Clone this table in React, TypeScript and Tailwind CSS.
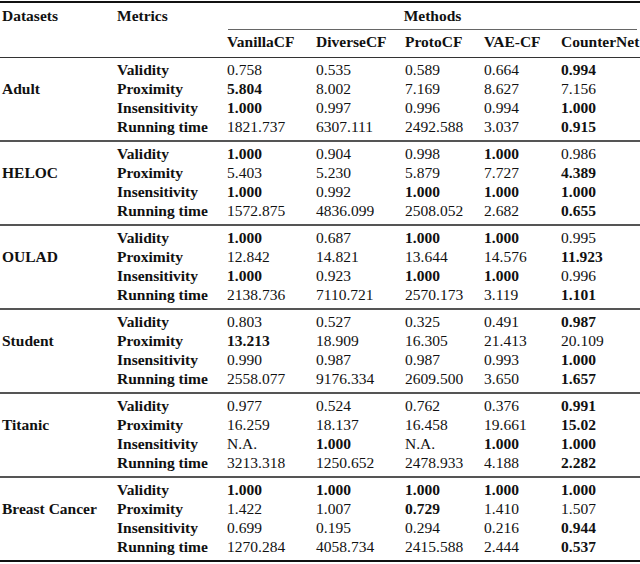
type Group = { name: string; rows: string[][] };

const metrics = ['Validity', 'Proximity', 'Insensitivity', 'Running time'];
const methods = ['VanillaCF', 'DiverseCF', 'ProtoCF', 'VAE-CF', 'CounterNet'];

// '*' marks a bold (best) value
const groups: Group[] = [
  {
    name: 'Adult',
    rows: [
      ['0.758', '0.535', '0.589', '0.664', '*0.994'],
      ['*5.804', '8.002', '7.169', '8.627', '7.156'],
      ['*1.000', '0.997', '0.996', '0.994', '*1.000'],
      ['1821.737', '6307.111', '2492.588', '3.037', '*0.915'],
    ],
  },
  {
    name: 'HELOC',
    rows: [
      ['*1.000', '0.904', '0.998', '*1.000', '0.986'],
      ['5.403', '5.230', '5.879', '7.727', '*4.389'],
      ['*1.000', '0.992', '*1.000', '*1.000', '*1.000'],
      ['1572.875', '4836.099', '2508.052', '2.682', '*0.655'],
    ],
  },
  {
    name: 'OULAD',
    rows: [
      ['*1.000', '0.687', '*1.000', '*1.000', '0.995'],
      ['12.842', '14.821', '13.644', '14.576', '*11.923'],
      ['*1.000', '0.923', '*1.000', '*1.000', '0.996'],
      ['2138.736', '7110.721', '2570.173', '3.119', '*1.101'],
    ],
  },
  {
    name: 'Student',
    rows: [
      ['0.803', '0.527', '0.325', '0.491', '*0.987'],
      ['*13.213', '18.909', '16.305', '21.413', '20.109'],
      ['0.990', '0.987', '0.987', '0.993', '*1.000'],
      ['2558.077', '9176.334', '2609.500', '3.650', '*1.657'],
    ],
  },
  {
    name: 'Titanic',
    rows: [
      ['0.977', '0.524', '0.762', '0.376', '*0.991'],
      ['16.259', '18.137', '16.458', '19.661', '*15.02'],
      ['N.A.', '*1.000', 'N.A.', '*1.000', '*1.000'],
      ['3213.318', '1250.652', '2478.933', '4.188', '*2.282'],
    ],
  },
  {
    name: 'Breast Cancer',
    rows: [
      ['*1.000', '*1.000', '*1.000', '*1.000', '*1.000'],
      ['1.422', '1.007', '*0.729', '1.410', '1.507'],
      ['0.699', '0.195', '0.294', '0.216', '*0.944'],
      ['1270.284', '4058.734', '2415.588', '2.444', '*0.537'],
    ],
  },
];

function cellPad(i: number, gi: number) {
  const top = i === 0 ? (gi === 0 ? 'pt-[2px]' : 'pt-[2px] border-t-2 border-[#555]') : '';
  const bottom = i === 3 ? 'pb-[4px]' : '';
  return `${top} ${bottom}`;
}

export default function App() {
  return (
    <div className="w-[640px] h-[564px] bg-white text-[#111] pt-[1px] font-['Liberation_Serif','Times_New_Roman',serif] text-[15.5px] leading-[19px]">
      <div className="border-t-2 border-b-2 border-[#111]">
        <table className="w-full table-fixed border-collapse">
          <colgroup>
            <col className="w-[115px]" />
            <col className="w-[110px]" />
            <col className="w-[89px]" />
            <col className="w-[89px]" />
            <col className="w-[79px]" />
            <col className="w-[77px]" />
            <col className="w-[81px]" />
          </colgroup>
          <thead>
            <tr>
              <th className="text-left align-top font-bold pl-[2px] pt-[3px]">Datasets</th>
              <th className="text-left align-top font-bold pl-[2px] pt-[3px]">Metrics</th>
              <th colSpan={5} className="font-bold pt-[3px] align-top">
                <div className="mx-[3px] pb-[4px] border-b border-[#666] text-center">Methods</div>
              </th>
            </tr>
            <tr>
              <th className="border-b border-[#333] pt-[2px] pb-[6px]"></th>
              <th className="border-b border-[#333] pt-[2px] pb-[6px]"></th>
              {methods.map(m => (
                <th key={m} className="text-left font-bold pl-[2px] pt-[2px] pb-[6px] border-b border-[#333] whitespace-nowrap">
                  {m}
                </th>
              ))}
            </tr>
          </thead>
          <tbody>
            {groups.map((g, gi) =>
              g.rows.map((row, i) => (
                <tr key={g.name + i}>
                  <td className={`pl-[2px] font-bold whitespace-nowrap ${cellPad(i, gi)}`}>{i === 1 ? g.name : ''}</td>
                  <td className={`pl-[2px] font-bold whitespace-nowrap ${cellPad(i, gi)}`}>{metrics[i]}</td>
                  {row.map((v, j) => (
                    <td key={j} className={`pl-[2px] whitespace-nowrap ${v.startsWith('*') ? 'font-bold' : ''} ${cellPad(i, gi)}`}>
                      {v.replace('*', '')}
                    </td>
                  ))}
                </tr>
              ))
            )}
          </tbody>
        </table>
      </div>
    </div>
  );
}
